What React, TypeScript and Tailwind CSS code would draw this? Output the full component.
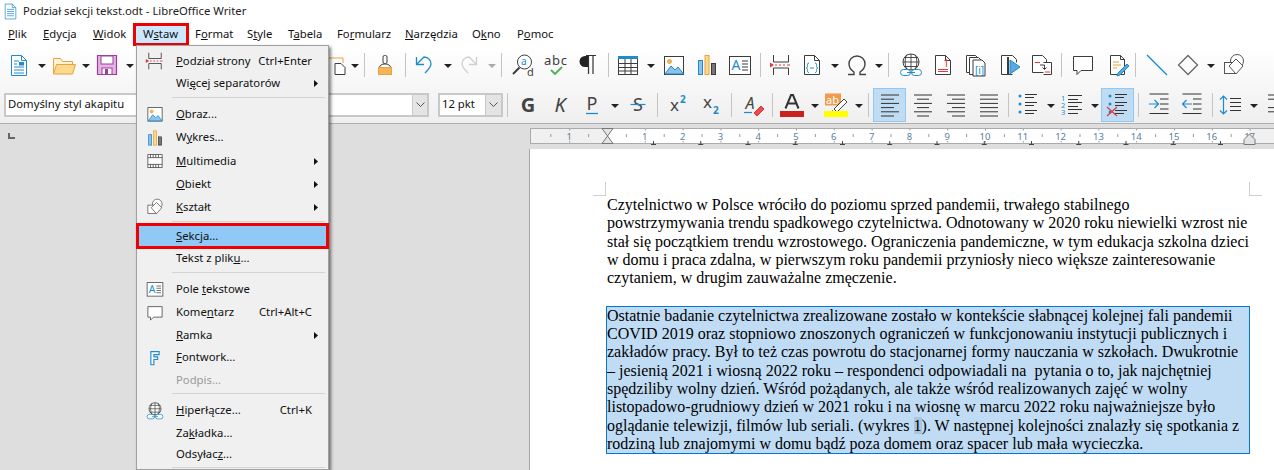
import React from "react";

type IP = { size?: number; className?: string; children?: React.ReactNode };
const S = ({ size = 24, className = "", children }: IP) => (
  <svg width={size} height={size} viewBox="0 0 24 24" fill="none" className={"shrink-0 overflow-visible " + className}>{children}</svg>
);
const D = "#3c3c3c", B = "#1e8bcd", O = "#e8a33d", R = "#e0383c";

const Arrow = ({ className = "" }: { className?: string }) => (
  <svg width="8" height="24" viewBox="0 0 8 24" className={"shrink-0 " + className}><path d="M0 11h8l-4 4z" fill="#222" /></svg>
);
const ArrowG = ({ className = "" }: { className?: string }) => (
  <svg width="8" height="24" viewBox="0 0 8 24" className={"shrink-0 " + className}><path d="M0 11h8l-4 4z" fill="#aaa" /></svg>
);
const Sep = ({ className = "" }: { className?: string }) => <div className={"w-px h-[24px] bg-[#c4c4c4] shrink-0 " + className} />;

const NewDoc = (p: IP) => <S {...p}><path d="M4.500 2.500h10l5 5v15h-15z" stroke={B} fill="#fff" /><path d="M14.500 2.500v5h5" stroke={B} /><path d="M7 11h3M7 14h10M7 17h10M7 20h10M7 8h5" stroke={B} /><rect x="12" y="9" width="5" height="3.500" fill={B} /></S>;
const Folder = (p: IP) => <S {...p}><path d="M1.500 21V5.500h7l2 3h10V12" stroke={O} fill="#fff3d6" /><path d="M1.500 21l3-9.500h19l-3 9.500z" stroke={O} fill="#fcd98e" /></S>;
const Save = (p: IP) => <S {...p}><path d="M2.500 2.500h19v19h-19z" stroke="#9b3f9b" fill="#e6b3e6" strokeWidth="1.200" /><rect x="6" y="3" width="12" height="8" fill="#fff" stroke="#9b3f9b" /><rect x="7" y="15" width="10" height="6.500" fill="#fff" stroke="#9b3f9b" /><rect x="10" y="16" width="3" height="5" fill="#9b3f9b" /></S>;
const Paste = (p: IP) => <S {...p}><path d="M5 5h14v5" stroke={O} /><path d="M11 10.500h6l4 4v7H11z" stroke={D} fill="#fff" /></S>;
const Brush = (p: IP) => <S {...p}><rect x="10" y="2.500" width="4" height="8" rx="1.500" stroke={D} fill="#fff" /><path d="M6.500 14.500c0-2 2-3.500 5.500-3.500s5.500 1.500 5.500 3.500z" stroke={D} fill="#fff" /><rect x="5.500" y="14.500" width="13" height="7" fill="#f5b45b" stroke={O} /></S>;
const Undo = (p: IP) => <S {...p}><path d="M5 11l7-7c5 0 7 4 7 7s-3 6-6 9" stroke={B} strokeWidth="1.300" /><path d="M4.500 4v7.500H12" stroke={B} strokeWidth="1.300" /></S>;
const Redo = (p: IP) => <S {...p}><path d="M19 11l-7-7c-5 0-7 4-7 7s3 6 6 9" stroke="#cfcfcf" strokeWidth="1.300" /><path d="M19.500 4v7.500H12" stroke="#cfcfcf" strokeWidth="1.300" /></S>;
const Find = (p: IP) => <S {...p}><circle cx="13.500" cy="9" r="7" stroke={D} fill="#fff" /><path d="M8.500 14.500L2 21" stroke={D} strokeWidth="2" /><text x="10" y="12" fontSize="10" fontFamily="Noto Sans" fill={B}>a</text><text x="16" y="23" fontSize="11" fontFamily="Noto Sans" fill={D}>d</text></S>;
const Spell = (p: IP) => <S {...p}><text x="0" y="12" fontSize="13" fontFamily="Noto Sans" fill={D} textLength="23">abc</text><path d="M7 17l4 4 7-7" stroke="#4caf50" strokeWidth="1.800" /></S>;
const Pil = (p: IP) => <S {...p}><path d="M12 3H9a5 5 0 000 11h3z" fill="#222" /><path d="M12.500 3v18M17 3v18M10 2.500h10" stroke="#333" strokeWidth="1.200" /></S>;
const Table = (p: IP) => <S {...p}><rect x="2.500" y="3.500" width="19" height="18" stroke={D} fill="#fff" /><rect x="2" y="3" width="20" height="3" fill={B} /><path d="M2.500 10.500h19M2.500 14.500h19M2.500 18h19M9 6v15M15 6v15" stroke={D} /></S>;
const Img = (p: IP) => <S {...p}><rect x="2.500" y="3.500" width="19" height="18" stroke={D} fill="#fff" /><circle cx="7.500" cy="8.500" r="2" fill="#f5b45b" stroke={O} /><path d="M3 21l6-8 4 4 3-3 5.500 7z" fill="#8cc3ee" stroke={B} /></S>;
const Chart = (p: IP) => <S {...p}><rect x="3.500" y="7.500" width="4" height="14" fill="#8cc3ee" stroke={B} /><rect x="10" y="2.500" width="4" height="19" fill="#fcd98e" stroke={O} /><rect x="16.500" y="10.500" width="4" height="11" fill="#777" stroke={D} /></S>;
const TextBox = (p: IP) => <S {...p}><rect x="1.500" y="3.500" width="21" height="18" stroke={D} fill="#fff" /><text x="3.500" y="17" fontSize="14" fontFamily="Noto Sans" fill={B}>A</text><path d="M14 8h6M14 11h6M14 14h6M14 17h6" stroke={D} /></S>;
const PageBreak = (p: IP) => <S {...p}><path d="M4.500 2v7h15V2M4.500 22v-7h15v7" stroke={D} /><path d="M6 12h2M10 12h2M14 12h2M18 12h3" stroke={R} /><path d="M1 9.500L5 12l-4 2.500z" fill={R} /></S>;
const Field = (p: IP) => <S {...p}><path d="M4.500 2.500h10l5 5v14h-15z" stroke={D} fill="#fff" /><path d="M14.500 2.500v5h5" stroke={D} /><path d="M9 10c-2 0-1.500 2-1.500 3.500S6 15 6 15s1.500 0 1.500 1.500S7 19.500 9 19.500M15 10c2 0 1.500 2 1.500 3.500S18 15 18 15s-1.500 0-1.500 1.500.5 3-1.500 3M10 15h4" stroke={B} /></S>;
const Omega = (p: IP) => <S {...p}><path d="M3 21.500h6v-2.500c-3-2-5-4.500-5-8 0-4.500 3.500-8 8-8s8 3.500 8 8c0 3.500-2 6-5 8v2.500h6" stroke="#444" strokeWidth="1.400" /></S>;
const Hyper = (p: IP) => <S {...p}><circle cx="12" cy="9" r="8" stroke={D} fill="#fff" /><path d="M4 9h16M5 4.500h14M5 13.500h14M12 1v16M8 1.500c-2.500 4-2.500 11 0 15M16 1.500c2.500 4 2.500 11 0 15" stroke={D} strokeWidth="0.900" /><rect x="1.500" y="16.500" width="10" height="6" rx="3" stroke={B} fill="#fff" /><rect x="12.500" y="16.500" width="10" height="6" rx="3" stroke={B} fill="#fff" /><path d="M8 19.500h8" stroke={B} /></S>;
const Foot = (p: IP) => <S {...p}><path d="M4.500 2.500h10l5 5v14h-15z" stroke={D} fill="#fff" /><path d="M14.500 2.500v5h5" stroke={D} /><text x="12" y="14" fontSize="11" fontFamily="Noto Sans" fill={R}>1</text><path d="M7 16.500h10M7 18.500h10" stroke={R} /></S>;
const Index = (p: IP) => <S {...p}><path d="M1.500 2.500h9l3 3v14h-12z" stroke={D} fill="#fff" /><path d="M4.500 4.500h9l3 3v14h-12z" stroke={D} fill="#fff" /><path d="M8 7h9l3 3v13H8z" stroke={D} fill="#fff" /><text x="10" y="21" fontSize="10" fontFamily="Noto Sans" fill={B}>[i]</text></S>;
const Book = (p: IP) => <S {...p}><path d="M3.500 2.500h11l4 4v3M3.500 2.500v19h11" stroke={D} fill="#fff" /><path d="M10 4v17" stroke={D} strokeWidth="2" /><path d="M12 7l10 7-10 7z" fill="#5aa9e0" stroke={B} /></S>;
const Cross = (p: IP) => <S {...p}><path d="M2.500 2.500h10l4 4v13h-14z" stroke={D} fill="#fff" /><path d="M13.500 9.500h8v12h-8" stroke={D} fill="#fff" /><path d="M5 9.500h5M15 19h5" stroke={R} /><path d="M10 12h4.500v4M12.500 14.500l2 2 2-2" stroke={D} /></S>;
const Comment = (p: IP) => <S {...p}><path d="M2.500 3.500h19v14H10l-4 4v-4H2.500z" stroke={D} fill="#fff" /></S>;
const Track = (p: IP) => <S {...p}><path d="M4.500 2.500h10l4 4v15h-14z" stroke={D} fill="#fff" /><path d="M14.500 2.500v4h4" stroke={D} /><path d="M7 9h6M7 12h8M7 15h4" stroke={O} /><path d="M12 20l9-9 2 2-9 9-3 1z" fill="#5aa9e0" stroke={B} /></S>;
const Line = (p: IP) => <S {...p}><path d="M2 2l20 20" stroke="#1a86d0" strokeWidth="1.200" /></S>;
const Diamond = (p: IP) => <S {...p}><path d="M12 2.500L21.500 12 12 21.500 2.500 12z" stroke="#666" strokeWidth="1.300" /></S>;
const Shapes = (p: IP) => <S {...p}><circle cx="15" cy="8" r="6.500" stroke="#555" fill="#fff" /><rect x="2.500" y="9.500" width="11" height="11" stroke="#555" fill="#fff" /><path d="M14 6l7 7-7 8-7-8z" stroke="#555" fill="#fff" /></S>;
const FontW = (p: IP) => <S {...p}><path d="M6.500 3.500h11v4h-7v3h5v3.500h-5v7h-4z" stroke={B} strokeWidth="1.500" fill="#fff" /></S>;
const Film = (p: IP) => <S {...p}><rect x="2.500" y="3.500" width="19" height="17" stroke={D} fill="#fff" /><path d="M2.500 7.500h19M2.500 16.500h19M6 3.500v4M9.500 3.500v4M13 3.500v4M16.500 3.500v4M6 16.500v4M9.500 16.500v4M13 16.500v4M16.500 16.500v4" stroke={D} /></S>;
const Bold = (p: IP) => <S {...p}><text x="12" y="19" textAnchor="middle" fontSize="20" fontWeight="700" fontFamily="Noto Sans" fill="#444">G</text></S>;
const Ital = (p: IP) => <S {...p}><text x="12" y="19" textAnchor="middle" fontSize="20" fontStyle="italic" fontFamily="Noto Sans" fill="#444">K</text></S>;
const Und = (p: IP) => <S {...p}><text x="12" y="17" textAnchor="middle" fontSize="18" fontFamily="Noto Sans" fill="#444">P</text><path d="M6 20.500h12" stroke={B} strokeWidth="1.300" /></S>;
const Strike = (p: IP) => <S {...p}><text x="12" y="18" textAnchor="middle" fontSize="18" fontFamily="Noto Sans" fill="#444">S</text><path d="M4.500 11.500h15" stroke={B} strokeWidth="1.200" /></S>;
const Sup = (p: IP) => <S {...p}><text x="11" y="18" textAnchor="end" fontSize="17" fontFamily="Noto Sans" fill="#444">x</text><text x="12" y="10" fontSize="10" fontWeight="700" fontFamily="Noto Sans" fill={B}>2</text></S>;
const Sub = (p: IP) => <S {...p}><text x="11" y="15" textAnchor="end" fontSize="17" fontFamily="Noto Sans" fill="#444">x</text><text x="12" y="21" fontSize="10" fontWeight="700" fontFamily="Noto Sans" fill={B}>2</text></S>;
const Clear = (p: IP) => <S {...p}><text x="9" y="16" textAnchor="middle" fontSize="16" fontStyle="italic" fontFamily="Noto Sans" fill="#444">A</text><path d="M3 19.500h8" stroke={B} strokeWidth="1.200" /><path d="M13 20l7-7 3 3-7 7z" fill="#e84c4f" stroke="#d33" /></S>;
const FontC = () => <svg width="24" height="28" viewBox="0 0 24 28" className="shrink-0"><path d="M5.500 17.500L11 4h2l5.500 13.500M7.500 12.500h9" stroke="#333" strokeWidth="2" fill="none" /><rect x="0" y="20" width="24" height="6" fill="#c9211e" /></svg>;
const High = () => <svg width="24" height="28" viewBox="0 0 24 28" className="shrink-0"><rect x="1" y="2.500" width="16" height="12" fill="#f09a4a" /><text x="2" y="12.500" fontSize="11" fontFamily="Noto Sans" fill="#fff">ab</text><path d="M10 18l10-10 3 3-10 10z" fill="#fff" stroke="#444" /><path d="M8 19l3 3-3 .5z" fill="#222" /><rect x="0" y="20" width="24" height="6" fill="#ffff00" /></svg>;
const Lines = ({ rows, ...p }: IP & { rows: [number, number][] }) => <S {...p}>{rows.map(([a, b], i) => <path key={i} d={`M${a} ${2 + i * 4.200}H${b}`} stroke="#333" />)}</S>;
const Bul = (p: IP & { cross?: boolean }) => <S size={p.size} className={p.className}>{[3, 11, 19].map(y => <React.Fragment key={y}><circle cx="4" cy={y} r="1.500" fill={B} /><path d={`M9 ${y - 1.500}H21M9 ${y + 1.500}H18`} stroke="#333" /></React.Fragment>)}{p.cross && <path d="M1 14l10 9M11 14l-10 9" stroke={R} strokeWidth="1.200" />}</S>;
const Num = (p: IP) => <S {...p}><text x="1" y="8" fontSize="7.500" fontFamily="Noto Sans" fill={B}>1</text><text x="1" y="15" fontSize="7.500" fontFamily="Noto Sans" fill={B}>2</text><text x="1" y="22" fontSize="7.500" fontFamily="Noto Sans" fill={B}>3</text>{[3, 10, 17].map(y => <path key={y} d={`M8 ${y - 0.500}H22M8 ${y + 3.500}H18`} stroke="#333" />)}</S>;
const Indent = (p: IP & { rev?: boolean }) => <S size={p.size} className={p.className}><path d="M2.500 1h19M13 6h8.500M13 11h8.500M13 16h8.500M2.500 20.500h19" stroke="#333" /><path d={p.rev ? "M12 11H2.500M6.500 7l-4 4 4 4" : "M2 11h9.500M7.500 7l4 4-4 4"} stroke={B} strokeWidth="1.200" /></S>;
const Spacing = (p: IP) => <S {...p}><path d="M4.500 3v18M1 6.500L4.500 3 8 6.500M1 17.500L4.500 21 8 17.500" stroke={B} strokeWidth="1.200" /><path d="M11 5.500h11M11 9.500h11M11 13.500h11M11 17.500h11" stroke="#333" /></S>;
const Doc = (p: IP) => <S {...p}><path d="M4.500 1.500h10l5 5v16h-15z" stroke={B} fill="#fff" /><path d="M14.500 1.500v5h5" stroke={B} /><path d="M7 9h10M7 12h10M7 15h10M7 18h10" stroke={B} /></S>;

const menuBar: [React.ReactNode, string][] = [
  [<span><u>P</u>lik</span>, "w-[35px]"],
  [<span><u>E</u>dycja</span>, "w-[50px]"],
  [<span><u>W</u>idok</span>, "w-[50px]"],
  [<span>W<u>s</u>taw</span>, "w-[52px]"],
  [<span>F<u>o</u>rmat</span>, "w-[52px]"],
  [<span>S<u>t</u>yle</span>, "w-[41px]"],
  [<span>T<u>a</u>bela</span>, "w-[49px]"],
  [<span>Fo<u>r</u>mularz</span>, "w-[68px]"],
  [<span><u>N</u>arzędzia</span>, "w-[67px]"],
  [<span>O<u>k</u>no</span>, "w-[45px]"],
  [<span>P<u>o</u>moc</span>, "w-[50px]"],
];

const Chev = () => <svg width="9" height="6" viewBox="0 0 9 6" fill="none"><path d="M.5.5l4 4 4-4" stroke="#555" /></svg>;

const MI = ({ h, icon, label, sc, sub, dis }: { h: string; icon?: React.ReactNode; label: React.ReactNode; sc?: string; sub?: boolean; dis?: boolean }) => (
  <div className={"flex items-center relative " + h + (dis ? " text-[#9a9a9a]" : "")}>
    <div className="w-[32px] flex justify-center items-center shrink-0 ml-[2px]">{icon}</div>
    <div className="ml-[5px] whitespace-nowrap">{label}</div>
    {sc && <div className="ml-auto mr-[16px] whitespace-nowrap">{sc}</div>}
    {sub && <svg width="4" height="7" viewBox="0 0 4 7" className="ml-auto mr-[10px]"><path d="M0 0l4 3.500L0 7z" fill="#111" /></svg>}
  </div>
);
const MS = ({ h, pt }: { h: string; pt: string }) => (
  <div className={h + " " + pt + " pl-[35px] pr-[3px]"}><div className="h-px bg-[#d4d4d4]" /></div>
);

const para1 = [
  "Czytelnictwo w Polsce wróciło do poziomu sprzed pandemii, trwałego stabilnego",
  "powstrzymywania trendu spadkowego czytelnictwa. Odnotowany w 2020 roku niewielki wzrost nie",
  "stał się początkiem trendu wzrostowego. Ograniczenia pandemiczne, w tym edukacja szkolna dzieci",
  "w domu i praca zdalna, w pierwszym roku pandemii przyniosły nieco większe zainteresowanie",
  "czytaniem, w drugim zauważalne zmęczenie.",
];
const para2: React.ReactNode[] = [
  "Ostatnie badanie czytelnictwa zrealizowane zostało w kontekście słabnącej kolejnej fali pandemii",
  "COVID 2019 oraz stopniowo znoszonych ograniczeń w funkcjonowaniu instytucji publicznych i",
  "zakładów pracy. Był to też czas powrotu do stacjonarnej formy nauczania w szkołach. Dwukrotnie",
  "– jesienią 2021 i wiosną 2022 roku – respondenci odpowiadali na  pytania o to, jak najchętniej",
  "spędziliby wolny dzień. Wśród pożądanych, ale także wśród realizowanych zajęć w wolny",
  "listopadowo-grudniowy dzień w 2021 roku i na wiosnę w marcu 2022 roku najważniejsze było",
  <>oglądanie telewizji, filmów lub seriali. (wykres <span className="bg-[#a9c6de]">1</span>). W następnej kolejności znalazły się spotkania z</>,
  "rodziną lub znajomymi w domu bądź poza domem oraz spacer lub mała wycieczka.",
];

const nums: [number, string][] = [[569.2, "1"], ...Array.from({ length: 17 }, (_, i) => [607 + (i + 1) * 37.8, String(i + 1)] as [number, string])];
const halves = Array.from({ length: 19 }, (_, i) => 550.3 + i * 37.8);
const tabs = Array.from({ length: 13 }, (_, i) => 653.5 + i * 47.25);

const Ruler = () => (
  <svg width="744" height="25" viewBox="530 124 744 25" className="block">
    <rect x="530.500" y="128.500" width="760" height="15" fill="#f0f0f0" stroke="#ababab" />
    <rect x="607" y="129" width="642" height="14" fill="#fff" />
    {halves.map((x, i) => <rect key={i} x={x} y="134" width="1" height="3" fill="#9a9a9a" />)}
    {nums.map(([x], i) => <React.Fragment key={i}><rect x={x} y="129" width="1" height="1.500" fill="#999" /><rect x={x} y="141" width="1" height="1.500" fill="#999" /></React.Fragment>)}
    {nums.map(([x, t], i) => <text key={i} x={x} y="139.500" textAnchor="middle" fontSize="9.500" fontFamily="Noto Sans" fill="#5c7d9c">{t}</text>)}
    {tabs.map((x, i) => <path key={i} d={`M${x} 141v3.500M${x - 2.500} 144.500h5`} stroke="#444" strokeWidth="1" />)}
    <path d="M602 128.500h11l-5.500 7.500 5.500 7.500h-11l5.500-7.500z" fill="#e4e4e4" stroke="#777" />
    <path d="M1249.500 134l5.500 5.500v5h-11v-5z" fill="#e4e4e4" stroke="#777" />
  </svg>
);

export default function App() {
  return (
    <div className="relative w-[1274px] h-[470px] overflow-hidden bg-[#dedede] text-[11.3px] text-[#111] flex flex-col font-['Noto_Sans','Open_Sans',sans-serif]">
      <div className="h-[22px] bg-white flex items-center shrink-0 pl-[2px] pt-[1px]">
        <Doc size={17} />
        <span className="ml-[4px] text-[#222]">Podział sekcji tekst.odt - LibreOffice Writer</span>
      </div>
      <div className="h-[24px] bg-white flex items-center shrink-0 pl-[8px] pt-[1px]">
        {menuBar.map(([l, w], i) => (
          <div key={i} className={"relative shrink-0 " + w}>
            {i === 3 && <div className="absolute left-[-10px] top-[-3px] w-[56px] h-[23px] bg-[#cce8ff] border-[3px] border-[#f00000]" />}
            <span className="relative">{l}</span>
          </div>
        ))}
      </div>
      <div className="shrink-0 bg-gradient-to-b from-white to-[#efefef] border-b border-[#b0b0b0]">
        <div className="h-[40px] pb-[2px] flex items-center">
          <NewDoc className="ml-[7px]" /><Arrow className="ml-[7px]" />
          <Folder className="ml-[6px]" /><Arrow className="ml-[6px]" />
          <Save className="ml-[5px]" /><Arrow className="ml-[7px]" />
          <Paste className="ml-[190px]" /><Arrow className="ml-[3px]" /><Sep className="ml-[5px]" />
          <Brush className="ml-[8px]" /><Sep className="ml-[8px]" />
          <Undo className="ml-[6px]" /><Arrow className="ml-[8px]" />
          <Redo className="ml-[5px]" /><ArrowG className="ml-[7px]" /><Sep className="ml-[5px]" />
          <Find className="ml-[9px]" /><Spell className="ml-[9px]" /><Pil className="ml-[8px]" /><Sep className="ml-[8px]" />
          <Table className="ml-[7px]" /><Arrow className="ml-[7px]" />
          <Img className="ml-[7px]" /><Chart className="ml-[9px]" /><TextBox className="ml-[9px]" /><Sep className="ml-[8px]" />
          <PageBreak className="ml-[8px]" /><Field className="ml-[7px]" /><Arrow className="ml-[7px]" />
          <Omega className="ml-[6px]" /><Arrow className="ml-[6px]" /><Sep className="ml-[5px]" />
          <Hyper className="ml-[10px]" /><Foot className="ml-[8px]" /><Index className="ml-[10px]" /><Book className="ml-[9px]" /><Cross className="ml-[8px]" /><Sep className="ml-[7px]" />
          <Comment className="ml-[9px]" /><Track className="ml-[11px]" /><Sep className="ml-[5px]" />
          <Line className="ml-[9px]" /><Diamond className="ml-[7px]" /><Arrow className="ml-[7px]" /><Shapes className="ml-[7px]" />
        </div>
        <div className="h-[37px] flex items-center">
          <div className="ml-[4px] w-[425px] h-[24px] border-2 border-[#c8c8c8] bg-white flex items-center shrink-0">
            <span className="pl-[2px] flex-1">Domyślny styl akapitu</span>
            <div className="w-[15px] h-full bg-[#e4e4e4] border-l border-[#c8c8c8] flex items-center justify-center"><Chev /></div>
          </div>
          <div className="ml-[9px] w-[65px] h-[24px] border-2 border-[#c8c8c8] bg-white flex items-center shrink-0">
            <span className="pl-[2px] flex-1">12 pkt</span>
            <div className="w-[16px] h-full bg-[#e4e4e4] border-l border-[#c8c8c8] flex items-center justify-center"><Chev /></div>
          </div>
          <Sep className="ml-[4px]" />
          <Bold className="ml-[8px]" /><Ital className="ml-[8px]" /><Und className="ml-[8px]" /><Arrow className="ml-[7px]" /><Strike className="ml-[7px]" /><Sep className="ml-[7px]" />
          <Sup className="ml-[10px]" /><Sub className="ml-[9px]" /><Sep className="ml-[6px]" />
          <Clear className="ml-[9px]" /><Sep className="ml-[7px]" />
          <div className="ml-[7px] shrink-0"><FontC /></div><Arrow className="ml-[7px]" />
          <div className="ml-[5px] shrink-0"><High /></div><Arrow className="ml-[7px]" /><Sep className="ml-[5px]" />
          <div className="ml-[4px] w-[33px] h-[34px] bg-[#c0dcf3] border border-[#90c8f6] flex items-center justify-center shrink-0">
            <Lines rows={[[3, 21], [3, 16], [3, 21], [3, 16], [3, 21], [3, 16]]} />
          </div>
          <Lines className="ml-[5px]" rows={[[3, 21], [6, 18], [3, 21], [6, 18], [3, 21], [6, 18]]} />
          <Lines className="ml-[9px]" rows={[[3, 21], [8, 21], [3, 21], [8, 21], [3, 21], [8, 21]]} />
          <Lines className="ml-[9px]" rows={[[3, 21], [3, 21], [3, 21], [3, 21], [3, 21], [3, 21]]} />
          <Sep className="ml-[7px]" />
          <Bul className="ml-[7px]" /><Arrow className="ml-[7px]" />
          <Num className="ml-[5px]" /><Arrow className="ml-[7px]" />
          <div className="ml-[2px] w-[33px] h-[34px] bg-[#c0dcf3] border border-[#90c8f6] flex items-center justify-center shrink-0"><Bul cross /></div>
          <Sep className="ml-[4px]" />
          <Indent className="ml-[8px]" /><Indent rev className="ml-[9px]" /><Sep className="ml-[8px]" />
          <Spacing className="ml-[6px]" /><Arrow className="ml-[7px]" />
          <Lines className="ml-[8px]" rows={[[2, 24], [2, 24], [30, 30], [2, 24], [2, 24]]} />
        </div>
      </div>
      <div className="flex-1 flex min-h-0">
        <div className="w-[530px] shrink-0 relative">
          <div className="ml-[8px] mt-[9px] w-[7px] h-[6px] border-l-2 border-b-2 border-[#666]" />
        </div>
        <div className="flex-1 flex flex-col min-w-0">
          <div className="shrink-0"><Ruler /></div>
          <div className="flex-1 bg-white relative pl-[76px] pt-[47px] font-['Liberation_Serif',serif] text-[16px] leading-[18.3px] text-black whitespace-pre shadow-[-1px_0_0_#a8a8a8]">
            <div className="absolute left-[63px] top-[33px] w-[13px] h-[14px] border-r border-b border-[#d0d0d0]" />
            <div className="absolute left-[719px] top-[33px] w-[13px] h-[14px] border-l border-b border-[#d0d0d0]" />
            {para1.map((t, i) => <div key={i} className="pl-px">{t}</div>)}
            <div className="h-[19.3px]" />
            <div className="ml-px w-[642px] bg-[#c0dcf5] outline outline-1 outline-[#0078d7]">
              {para2.map((t, i) => <div key={i}>{t}</div>)}
            </div>
          </div>
        </div>
      </div>

      <div className="absolute left-[136px] top-[45px] w-[193px] h-[425px] bg-[#f0f0f0] border border-[#a0a0a0] shadow-[2px_2px_3px_rgba(0,0,0,0.5)] text-[#111]">
        <div className="pt-[4px]">
          <MI h="h-[22px]" icon={<PageBreak size={20} />} label={<><u>P</u>odział strony</>} sc="Ctrl+Enter" />
          <MI h="h-[22px]" label={<>Wi<u>ę</u>cej separatorów</>} sub />
          <MS h="h-[8px]" pt="pt-[3px]" />
          <MI h="h-[24px]" icon={<Img size={18} />} label={<><u>O</u>braz...</>} />
          <MI h="h-[23px]" icon={<Chart size={18} />} label={<>W<u>y</u>kres...</>} />
          <MI h="h-[24px]" icon={<Film size={18} />} label={<><u>M</u>ultimedia</>} sub />
          <MI h="h-[22px]" label={<><u>O</u>biekt</>} sub />
          <MI h="h-[24px]" icon={<Shapes size={18} />} label={<><u>K</u>ształt</>} sub />
          <MS h="h-[6px]" pt="pt-[2px]" />
          <div className="relative">
            <div className="absolute left-[-1px] top-[-2px] w-[193px] h-[26px] bg-[#90c8f6] border-[3px] border-[#f00000]" />
            <MI h="h-[22px]" label={<><u>S</u>ekcja...</>} />
          </div>
          <MI h="h-[22px]" label={<>Tekst z plik<u>u</u>...</>} />
          <MS h="h-[8px]" pt="pt-[3px]" />
          <MI h="h-[24px]" icon={<TextBox size={18} />} label={<>Pole <u>t</u>ekstowe</>} />
          <MI h="h-[23px]" icon={<Comment size={18} />} label={<>Kome<u>n</u>tarz</>} sc="Ctrl+Alt+C" />
          <MI h="h-[22px]" label={<><u>R</u>amka</>} sub />
          <MI h="h-[23px]" icon={<FontW size={18} />} label={<><u>F</u>ontwork...</>} />
          <MI h="h-[22px]" dis label="Podpis..." />
          <MS h="h-[8px]" pt="pt-[2px]" />
          <MI h="h-[23px]" icon={<Hyper size={18} />} label={<><u>H</u>iperłącze...</>} sc="Ctrl+K" />
          <MI h="h-[22px]" label={<>Za<u>k</u>ładka...</>} />
          <MI h="h-[21px]" label={<>Odsyłac<u>z</u>...</>} />
          <MS h="h-[5px]" pt="pt-[2px]" />
        </div>
      </div>
    </div>
  );
}
